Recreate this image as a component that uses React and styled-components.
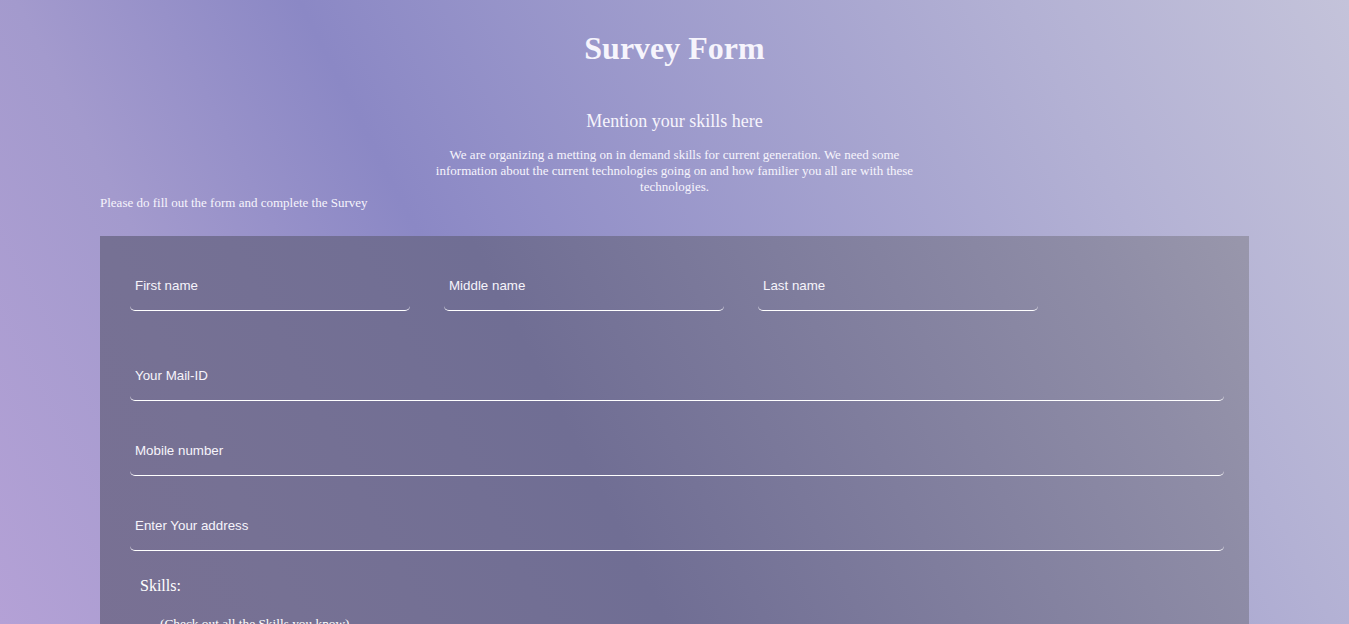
import React from "react";
import styled, { createGlobalStyle } from "styled-components";

const GlobalStyle = createGlobalStyle`
  html, body {
    margin: 0;
    padding: 0;
  }
  body {
    font-family: "Liberation Serif", "Times New Roman", serif;
    color: #ffffff;
    background: linear-gradient(63deg, #b4a1d6 0%, #a39acd 20%, #8b88c5 37%, #b3b1d4 80%, #c4c3da 100%);
    background-attachment: fixed;
    min-height: 100vh;
  }
`;

const Page = styled.div`
  padding: 30px 100px 60px;
`;

const Title = styled.h1`
  margin: 0;
  font-size: 32px;
  line-height: 37px;
  font-weight: bold;
  text-align: center;
  color: #f6f4fc;
`;

const Intro = styled.div`
  margin-top: 44px;
`;

const Subtitle = styled.h3`
  margin: 0;
  font-size: 18px;
  line-height: 21px;
  font-weight: normal;
  text-align: center;
  color: #f6f4fc;
`;

const Lead = styled.p`
  margin: 15px auto 0;
  width: 490px;
  font-size: 13px;
  line-height: 16px;
  text-align: center;
  color: #f6f4fc;
`;

const Note = styled.p`
  margin: 0;
  font-size: 13px;
  line-height: 15px;
  color: #f6f4fc;
`;

const Card = styled.form`
  margin-top: 26px;
  padding: 25px 25px 40px 30px;
  background: linear-gradient(63deg, #7a7093 0%, #767194 18%, #706e94 40%, #8e8ca6 76%, #9896ab 86%, #a09eb0 100%);
  background-attachment: fixed;
  display: flex;
  flex-direction: column;
`;

const NameRow = styled.div`
  display: flex;
  gap: 34px;
  margin-bottom: 40px;
`;

const Field = styled.input`
  box-sizing: border-box;
  display: block;
  width: ${(p) => (p.$short ? "280px" : "100%")};
  height: 50px;
  padding: 0 5px;
  margin: 0 0 ${(p) => (p.$short ? "0" : "25px")};
  border: none;
  border-bottom: 1px solid #ffffff;
  border-radius: 5px;
  background: transparent;
  color: #ffffff;
  font-family: "Liberation Sans", Arial, sans-serif;
  font-size: 13.33px;
  outline: none;
  &::placeholder {
    color: #f6f4fb;
    opacity: 1;
  }
`;

const SkillsTitle = styled.div`
  margin: 1px 0 0 10px;
  font-size: 16px;
  line-height: 18px;
`;

const SkillsHint = styled.div`
  margin: 21px 0 0 30px;
  font-size: 13.33px;
  line-height: 16px;
`;

const SkillList = styled.div`
  margin: 16px 0 0 30px;
  display: flex;
  flex-direction: column;
  gap: 10px;
  font-size: 14px;
`;

const SkillItem = styled.label`
  display: flex;
  align-items: center;
  gap: 8px;
`;

const skills = ["HTML", "CSS", "JavaScript", "React", "Python", "Java"];

export default function App() {
  return (
    <>
      <GlobalStyle />
      <Page>
        <Title>Survey Form</Title>
        <Intro>
          <Subtitle>Mention your skills here</Subtitle>
          <Lead>
            We are organizing a metting on in demand skills for current generation. We need some
            information about the current technologies going on and how familier you all are with
            these technologies.
          </Lead>
        </Intro>
        <Note>Please do fill out the form and complete the Survey</Note>
        <Card onSubmit={(e) => e.preventDefault()}>
          <NameRow>
            <Field $short type="text" placeholder="First name" />
            <Field $short type="text" placeholder="Middle name" />
            <Field $short type="text" placeholder="Last name" />
          </NameRow>
          <Field type="email" placeholder="Your Mail-ID" />
          <Field type="tel" placeholder="Mobile number" />
          <Field type="text" placeholder="Enter Your address" />
          <SkillsTitle>Skills:</SkillsTitle>
          <SkillsHint>(Check out all the Skills you know)</SkillsHint>
          <SkillList>
            {skills.map((s) => (
              <SkillItem key={s}>
                <input type="checkbox" />
                {s}
              </SkillItem>
            ))}
          </SkillList>
        </Card>
      </Page>
    </>
  );
}
